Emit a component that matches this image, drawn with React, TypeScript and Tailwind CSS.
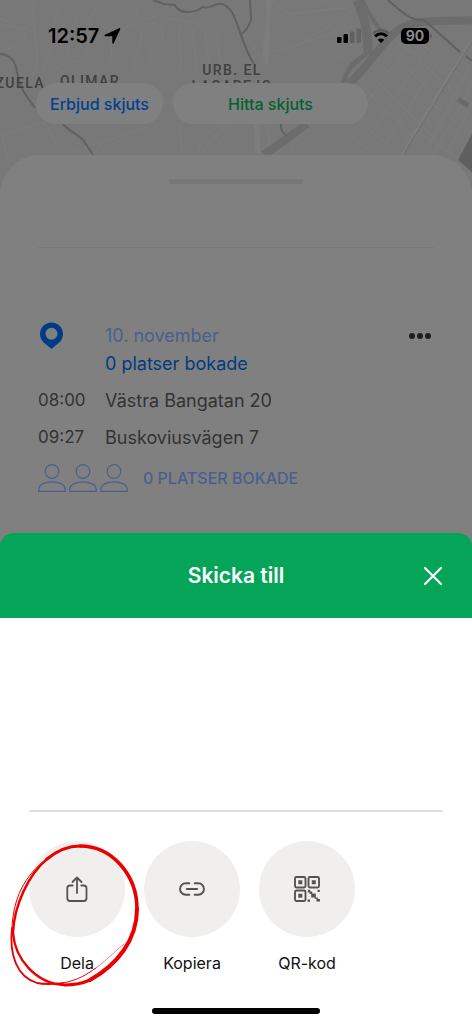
import type { ReactNode } from "react";

const MINOR_ROADS = [
  "M0 18 L22 30 L48 12 L60 0",
  "M34 0 C30 26 40 44 36 68 M62 4 C48 24 56 46 46 62 C40 74 52 76 60 66 C74 52 66 30 82 12",
  "M96 8 C84 24 92 40 86 54 C80 66 70 58 62 66 M110 18 C104 34 116 44 110 60 C104 72 118 78 124 66",
  "M122 30 C132 20 146 26 140 42 C136 56 130 62 138 74 M150 24 C164 20 168 38 156 46 C146 54 150 70 162 74",
  "M138 6 C130 20 148 22 160 14 C172 24 192 18 200 26",
  "M180 28 C176 44 186 58 178 74 M194 26 C190 42 200 56 194 76 M206 30 C204 46 212 58 206 72 M218 34 C214 48 224 60 222 74",
  "M0 52 C16 44 28 48 24 36 C20 24 8 28 0 24",
  "M0 136 L44 122 L60 150 M2 136 L10 170 M20 96 L0 118",
  "M66 154 L150 126 M96 152 L106 138 M110 150 L116 140",
  "M180 124 L182 154 M198 154 C200 140 208 132 222 124 M204 154 C206 144 214 136 230 124 M212 154 L228 132",
  "M236 62 L300 44 L352 12 M262 64 L268 0 M240 24 L262 60 M300 44 L340 30",
  "M270 0 L290 14 L340 8 M330 52 L345 60 M318 0 L352 12",
  "M258 124 L256 154 M266 124 L272 154 M284 124 L302 146",
];

const STREET_GRID = [
  "M384 68 L444 126 M376 80 L436 140 M368 92 L420 144 M396 58 L452 110 M408 50 L458 96 M420 42 L464 82 M362 124 L398 152 M346 134 L372 152",
  "M414 36 L352 124 M428 48 L372 132 M438 62 L386 142 M450 74 L400 150",
  "M422 118 L472 154 M414 130 L464 162 M432 104 L472 132 M454 70 L472 84",
  "M472 62 L424 154 M472 84 L434 154 M472 104 L446 154 M392 38 L444 74 M300 130 L290 150",
];

function MapBackdrop() {
  return (
    <svg
      className="absolute inset-x-0 top-0 h-[200px] w-full"
      viewBox="0 0 472 200"
      preserveAspectRatio="xMidYMin slice"
      fill="none"
      aria-hidden="true"
    >
      <rect width="472" height="200" fill="#787878" />
      <g stroke="#7d7d7d" strokeWidth="1">
        {MINOR_ROADS.map((d) => <path key={d} d={d} />)}
        {STREET_GRID.map((d) => <path key={d} d={d} />)}
      </g>
      <path d="M266 64 L269 0 M257 124 L258 154" stroke="#7d7d7d" strokeWidth="5" />
      {/* Railway */}
      <path d="M472 42 L404 154" stroke="#6e6e6e" strokeWidth="1" />
      <path d="M470 42 L402 154" stroke="#7e7e7e" strokeWidth="2" />
      {/* Highways */}
      <g stroke="#6c6c6c">
        <path d="M357 0 C364 16 368 30 368 54" strokeWidth="9" />
        <path d="M362 0 C370 14 376 28 386 34" strokeWidth="4" />
        <path d="M368 50 C362 62 350 58 343 84" strokeWidth="5" />
        <path d="M472 20 C442 22 416 18 398 30 C382 42 370 64 349 84" strokeWidth="8" />
        <path d="M307 124 L264 155" strokeWidth="8" />
      </g>
      <g stroke="#616161" strokeLinejoin="round">
        <path d="M0 54 C10 54 16 62 17 72 C20 90 28 98 35 108 M63 124 C72 134 82 136 86 144 L93 155" strokeWidth="2" />
        <path d="M153 0 L164 4 L175 5 C180 16 198 12 202 7 C212 10 214 2 222 4 C238 8 238 40 254 64" strokeWidth="2" />
        <path d="M250 0 L251 20 C248 28 246 30 242 34 M388 0 C402 12 408 20 424 20 L460 52 M466 56 L472 61" strokeWidth="2" />
        <path d="M281 124 C280 130 284 134 287 136" strokeWidth="2" />
      </g>
      <path d="M472 134 L472 172 L458 160 Z" fill="#5f5f5f" />
      <path d="M459 97 L469 103 L467 108 L457 101 Z" fill="#6a6a6a" />
      <g className="font-['Roboto'] text-[14px] font-medium tracking-widest" fill="#404040">
        <text x="45" y="88" textAnchor="end">ZUELA</text>
        <text x="90" y="86" textAnchor="middle">OLIMAR</text>
        <text x="232" y="75" textAnchor="middle">URB. EL</text>
        <text x="232" y="91" textAnchor="middle">LAGAREJO</text>
      </g>
    </svg>
  );
}

function StatusBar() {
  return (
    <div className="flex h-[71px] items-center justify-between pl-12 pr-10 text-black">
      <div className="flex items-center gap-1">
        <span className="font-['Inter'] text-xl font-semibold">12:57</span>
        <svg className="size-[18px]" viewBox="0 0 18 18" fill="currentColor" aria-hidden="true">
          <path d="M16.200 1.200 C17 0.900 17.500 1.500 17.200 2.300 L10.700 16.300 C10.300 17.100 9.300 16.900 9.300 16 V9.200 H2.200 C1.300 9.200 1.100 8.200 1.900 7.800 Z" />
        </svg>
      </div>
      <div className="flex items-center gap-2.5">
        <svg className="h-4 w-6" viewBox="0 0 24 16" aria-hidden="true">
          <rect x="0" y="9" width="4.500" height="6" rx="1.300" />
          <rect x="6.500" y="6" width="4.500" height="9" rx="1.300" />
          <rect x="13" y="3.500" width="4.500" height="11.500" rx="1.300" fill="#606060" />
          <rect x="19.500" y="0.500" width="4.500" height="14.500" rx="1.300" fill="#646464" />
        </svg>
        <svg className="h-4 w-5" viewBox="0 0 20 16" fill="none" aria-hidden="true">
          <path d="M2 5.500 C6.500 1 13.500 1 18 5.500" stroke="#5c5c5c" strokeWidth="2.400" />
          <path d="M4 8.400 C7.600 5 12.400 5 16 8.400" stroke="#000" strokeWidth="3" />
          <path d="M10 15 L6.600 11.700 C8.500 10 11.500 10 13.400 11.700 Z" fill="#000" />
        </svg>
        <div className="flex items-center gap-px">
          <span className="flex h-4 w-7 items-center justify-center rounded-[5px] bg-black font-['Inter'] text-sm font-bold text-[#8a8a8a]">
            90
          </span>
          <span className="h-1 w-0.5 rounded-r-full bg-[#5c5c5c]" />
        </div>
      </div>
    </div>
  );
}

function PersonIcon() {
  return (
    <svg className="size-7" viewBox="0 0 28 28" fill="none" stroke="#4a5f8f" strokeWidth="1.200" aria-hidden="true">
      <circle cx="14" cy="7.500" r="6.800" />
      <path d="M0.800 27.300 V25 C1.500 15.500 26.500 15.500 27.200 25 V27.300 Z" />
    </svg>
  );
}

function RideCard() {
  return (
    <section
      className="relative mt-[31px] flex-1 rounded-t-[40px] bg-[#808080] px-[38px] pb-10 pt-6 font-['Inter'] text-[#333333]"
      aria-label="Skjuts"
    >
      <div className="mx-auto h-[5px] w-[134px] rounded-full bg-[#777777]" />
      <hr className="mt-[63px] border-[#797979]" />

      <div className="mt-[74px] flex items-start">
        <div className="w-[67px] shrink-0">
          <svg className="h-7 w-8" viewBox="2 0 32 28" aria-hidden="true">
            <path
              fillRule="evenodd"
              fill="#003c86"
              d="M15.500 0.500 C9 0.500 4 5.500 4 12 C4 19.500 10 22 15.500 27 C21 22 27 19.500 27 12 C27 5.500 22 0.500 15.500 0.500 Z M15.500 5.800 A6 6 0 1 1 15.500 17.800 A6 6 0 1 1 15.500 5.800 Z"
            />
          </svg>
        </div>
        <div className="flex-1 text-lg leading-7">
          <p className="text-[#4a5f8f]">10. november</p>
          <p className="text-[#003c80]">0 platser bokade</p>
        </div>
        <button type="button" aria-label="Mer" className="flex h-7 items-center gap-0.5 pr-[3px]">
          <span className="size-1.5 rounded-full bg-[#1c1c1c]" />
          <span className="size-1.5 rounded-full bg-[#1c1c1c]" />
          <span className="size-1.5 rounded-full bg-[#1c1c1c]" />
        </button>
      </div>

      <dl className="mt-1 grid grid-cols-[67px_1fr] text-lg leading-[37px]">
        <dt className="text-[17px]">08:00</dt>
        <dd>Västra Bangatan 20</dd>
        <dt className="text-[17px]">09:27</dt>
        <dd>Buskoviusvägen 7</dd>
      </dl>

      <div className="mt-2 flex items-center gap-[3px] text-[#4a5f8f]">
        <PersonIcon />
        <PersonIcon />
        <PersonIcon />
        <span className="ml-3 text-base font-medium">0 PLATSER BOKADE</span>
      </div>
    </section>
  );
}

function ShareIcon() {
  return (
    <svg className="size-7" viewBox="0 0 28 28" fill="none" stroke="#55554f" strokeWidth="1.800" strokeLinecap="round" strokeLinejoin="round" aria-hidden="true">
      <path d="M9.700 10.500 H7 C5.300 10.500 4.300 11.500 4.300 13.200 V23.300 C4.300 25 5.300 26 7 26 H20.800 C22.500 26 23.500 25 23.500 23.300 V13.200 C23.500 11.500 22.500 10.500 20.800 10.500 H18.300" />
      <path d="M14 18 V2.700 M9.500 7 L14 2.500 L18.500 7" />
    </svg>
  );
}

function LinkIcon() {
  return (
    <svg className="size-7" viewBox="0 0 28 28" fill="none" stroke="#55554f" strokeWidth="1.900" strokeLinecap="round" aria-hidden="true">
      <path d="M11.300 8.300 H7.700 A5.700 5.700 0 0 0 7.700 19.700 H11.300 M16.700 8.300 H20.300 A5.700 5.700 0 0 1 20.300 19.700 H16.700 M8.800 14 H19.200" />
    </svg>
  );
}

function QrIcon() {
  return (
    <svg className="size-7" viewBox="0 0 28 28" fill="#55554f" aria-hidden="true">
      <g fill="none" stroke="#55554f" strokeWidth="1.900">
        <rect x="2" y="2" width="10.500" height="10.500" rx="1.500" />
        <rect x="15.500" y="2" width="10.500" height="10.500" rx="1.500" />
        <rect x="2" y="15.500" width="10.500" height="10.500" rx="1.500" />
      </g>
      <path d="M5.300 5.300h4v4h-4z M18.800 5.300h4v4h-4z M5.300 18.800h4v4h-4z" />
      <path d="M14.800 14.800h2.400v1.600h2v2.200h3.600v4h2v1.400h2.200v2.600h-3.600v-2.800h-1.800v-1.400h-3.400v-3.400h-1.600v-1.400h-1.800z M24.600 14.800h2.200v2.200h-2.200z M14.600 24.400h2.400v2.400h-2.400z" />
    </svg>
  );
}

/* Hand-drawn ring round the first action; the width varies like a pen stroke */
function PenRing() {
  return (
    <svg
      className="pointer-events-none absolute left-1/2 top-0 h-[150px] w-[140px] -translate-x-1/2"
      viewBox="7 841 140 150"
      fill="none"
      stroke="#ea0000"
      strokeLinecap="round"
      aria-hidden="true"
    >
      <path d="M80 846 C112 846 137 875 137 909" strokeWidth="3.600" />
      <path d="M137 909 C137 940 117 965 90 980" strokeWidth="4" />
      <path d="M90 980 C81 984 73 985 65 985" strokeWidth="3.200" />
      <path d="M65 985 C36 984 15 959 13 933" strokeWidth="2.400" />
      <path d="M13 933 C14 905 29 874 47 859" strokeWidth="2.400" />
      <path d="M47 859 C58 850 69 846 80 846" strokeWidth="3.200" />
      <path d="M47 859 C24 875 13 900 12 928" strokeWidth="1" />
      <path d="M12 928 C9 955 17 977 37 983 C46 985 54 984 63 983" strokeWidth="1.800" />
      <path d="M63 983 C78 980 86 975 96 968" strokeWidth="1" />
      <path d="M96 968 C106 961 114 952 124 944" strokeWidth="0.500" />
    </svg>
  );
}

function ShareAction({ label, icon, children }: { label: string; icon: ReactNode; children?: ReactNode }) {
  return (
    <div className="relative w-24">
      <button type="button" className="flex w-full flex-col items-center gap-4 text-[#111111]">
        <span className="flex size-24 items-center justify-center rounded-full bg-[#f0efee]">{icon}</span>
        <span className="text-base leading-5">{label}</span>
      </button>
      {children}
    </div>
  );
}

function ShareSheet() {
  return (
    <section className="bg-[#808080] font-['Inter']" aria-labelledby="sheet-title">
      <header className="relative flex h-[85px] items-center justify-center rounded-t-[14px] bg-[#04a459] text-white">
        <h2 id="sheet-title" className="text-[21px] font-semibold">Skicka till</h2>
        <button type="button" aria-label="Stäng" className="absolute right-7 p-px">
          <svg className="size-5" viewBox="0 0 20 20" fill="none" stroke="currentColor" strokeWidth="2.200" strokeLinecap="round" aria-hidden="true">
            <path d="M2 2 L18 18 M18 2 L2 18" />
          </svg>
        </button>
      </header>
      <div className="bg-white px-[29px] pb-[10px] pt-48">
        <hr className="border-t-2 border-[#dfdfdf]" />
        <div className="mt-[29px] flex gap-[19px]">
          <ShareAction label="Dela" icon={<ShareIcon />}>
            <PenRing />
          </ShareAction>
          <ShareAction label="Kopiera" icon={<LinkIcon />} />
          <ShareAction label="QR-kod" icon={<QrIcon />} />
        </div>
        <div className="mx-auto mt-[35px] h-1.5 w-[168px] rounded-full bg-black" />
      </div>
    </section>
  );
}

export default function App() {
  return (
    <main className="relative flex min-h-screen flex-col overflow-hidden bg-[#808080]">
      <MapBackdrop />
      <div className="relative flex flex-1 flex-col">
        <StatusBar />
        <div className="mt-3 flex gap-2.5 px-9 font-['Inter'] text-base font-medium">
          <button type="button" className="h-[41px] w-[127px] rounded-full bg-[#808080] text-[#004093]">
            Erbjud skjuts
          </button>
          <button type="button" className="h-[41px] w-[195px] rounded-full bg-[#808080] text-[#006230]">
            Hitta skjuts
          </button>
        </div>
        <RideCard />
      </div>
      <div className="relative">
        <ShareSheet />
      </div>
    </main>
  );
}
